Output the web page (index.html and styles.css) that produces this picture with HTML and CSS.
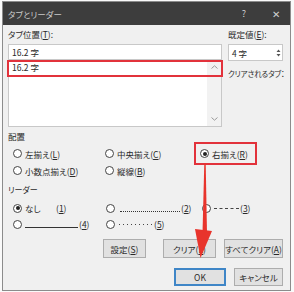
FILE: index.html
```html
<!DOCTYPE html>
<html lang="ja">
<head>
<meta charset="utf-8">
<link rel="stylesheet" href="styles.css">
</head>
<body>
<div class="dialog">
  <div class="titlebar">
    <span class="title">タブとリーダー</span>
    <span class="tb-btn">?</span>
    <span class="tb-btn close">✕</span>
  </div>
  <div class="content">
    <div class="top">
      <div class="tabpos">
        <div class="label">タブ位置(<u>T</u>):</div>
        <div class="input">16.2 字</div>
        <div class="list">
          <div class="items">
            <div class="item">16.2 字</div>
          </div>
          <div class="scrollbar">
            <svg class="chev" width="7" height="4" viewBox="0 0 7 4"><path d="M0.5 3.5L3.5 0.8L6.5 3.5" fill="none" stroke="#9a9a9a" stroke-width="1"/></svg>
            <svg class="chev" width="7" height="4" viewBox="0 0 7 4"><path d="M0.5 0.5L3.5 3.2L6.5 0.5" fill="none" stroke="#9a9a9a" stroke-width="1"/></svg>
          </div>
        </div>
      </div>
      <div class="defaults">
        <div class="label">既定値(<u>E</u>):</div>
        <div class="spin">
          <span class="spin-val">4 字</span>
          <span class="spin-btns">
            <svg width="5" height="10" viewBox="0 0 5 10"><path d="M0.5 4L2.5 1.5L4.5 4Z M0.5 6L2.5 8.5L4.5 6Z" fill="#555"/></svg>
          </span>
        </div>
        <div class="label cleared">クリアされるタブ：</div>
      </div>
    </div>

    <div class="section">配置</div>
    <div class="grid align-grid">
      <label class="radio"><span class="circle"></span>左揃え(<u>L</u>)</label>
      <label class="radio"><span class="circle"></span>中央揃え(<u>C</u>)</label>
      <label class="radio"><span class="circle on"></span>右揃え(<u>R</u>)</label>
      <label class="radio"><span class="circle"></span>小数点揃え(<u>D</u>)</label>
      <label class="radio"><span class="circle"></span>縦線(<u>B</u>)</label>
    </div>

    <div class="section leader-title">リーダー</div>
    <div class="grid leader-grid">
      <label class="radio"><span class="circle on"></span><span class="nashi">なし</span>(<u>1</u>)</label>
      <label class="radio"><span class="circle"></span><span class="ld dots2"></span>(<u>2</u>)</label>
      <label class="radio"><span class="circle"></span><span class="ld dash3"></span>(<u>3</u>)</label>
      <label class="radio"><span class="circle"></span><span class="ld line4"></span>(<u>4</u>)</label>
      <label class="radio"><span class="circle"></span><span class="ld mid5"></span>(<u>5</u>)</label>
    </div>

    <div class="btnrow first">
      <button class="btn b-set">設定(<u>S</u>)</button>
      <button class="btn b-clear">クリア(<u>L</u>)</button>
      <button class="btn b-all">すべてクリア(<u>A</u>)</button>
    </div>
    <div class="btnrow second">
      <button class="btn b-ok">OK</button>
      <button class="btn b-cancel">キャンセル</button>
    </div>
  </div>
  <div class="mark mark-item"></div>
  <div class="mark mark-right"></div>
</div>
<svg class="arrow" width="294" height="292" viewBox="0 0 294 292">
  <polygon points="204.3,163 205.7,163 207,233 202.5,233" fill="#e8342c"/>
  <polygon points="195,229 212,231 200.5,258" fill="#e8342c"/>
</svg>
</body>
</html>
```
FILE: styles.css
```css
* { box-sizing: border-box; }
html, body { margin: 0; padding: 0; }
body {
  width: 294px;
  height: 292px;
  background: #fafafa;
  position: relative;
  overflow: hidden;
  font-family: "Noto Sans CJK JP", "Noto Sans", sans-serif;
  font-size: 8.5px;
  color: #2a2a2a;
  font-feature-settings: "palt";
}
u { text-decoration: underline; text-underline-offset: 1px; }

.dialog {
  position: relative;
  margin: 1px 0 0 2px;
  width: 289px;
  height: 290px;
  border: 1px solid #8c8c8c;
  background: #f0f0f0;
}
.titlebar {
  height: 23px;
  background: #3d3d3d;
  color: #c9c9c9;
  display: flex;
  align-items: center;
  padding: 0 6px 0 5px;
}
.title { flex: 1; }
.tb-btn { width: 16px; text-align: center; font-size: 9px; color: #d0d0d0; }
.tb-btn.close { margin-left: 16px; font-size: 10px; }

.content { padding: 0 7px 0 5px; }
.top { display: flex; gap: 6px; }
.tabpos { width: 214px; }
.defaults { flex: 1; min-width: 0; }
.label { height: 14px; line-height: 14px; margin-top: 2px; white-space: nowrap; }
.input {
  margin-top: 3px;
  height: 16px;
  line-height: 14px;
  padding-left: 3px;
  background: #fff;
  border: 1px solid #c8c8c8;
}
.list {
  height: 67px;
  background: #fff;
  border: 1px solid #c8c8c8;
  border-top: none;
  display: flex;
}
.items { flex: 1; }
.item { height: 16px; line-height: 15px; padding-left: 3px; }
.scrollbar {
  width: 14px;
  background: #f2f2f2;
  display: flex;
  flex-direction: column;
  justify-content: space-between;
  align-items: center;
  padding: 5px 0 5px;
}
.chev { display: block; }

.spin {
  margin-top: 3px;
  height: 17px;
  background: #fff;
  border: 1px solid #c8c8c8;
  display: flex;
  align-items: center;
  padding-left: 3px;
}
.spin-val { flex: 1; }
.spin-btns { width: 8px; display: flex; justify-content: center; }
.spin-btns svg { display: block; }
.label.cleared { margin-top: 6px; font-size: 7.6px; letter-spacing: -0.2px; }

.section { height: 14px; line-height: 14px; margin-top: 2px; }
.grid { display: grid; padding-left: 5px; }
.align-grid { grid-template-columns: 92px 95px auto; grid-auto-rows: 17px; margin-top: 2px; }
.leader-grid { grid-template-columns: 93px 96px auto; grid-auto-rows: 16px; margin-top: 3px; }
.leader-title { margin-top: 4px; font-size: 8px; }

.radio { display: flex; align-items: center; white-space: nowrap; }
.circle {
  width: 9px;
  height: 9px;
  border: 1px solid #444;
  border-radius: 50%;
  background: #fff;
  margin-right: 3px;
  flex: none;
  display: flex;
  align-items: center;
  justify-content: center;
}
.circle.on::after {
  content: "";
  width: 4px;
  height: 4px;
  border-radius: 50%;
  background: #222;
}
.nashi { width: 31px; }
.ld { display: inline-block; flex: none; height: 8px; margin-right: 1px; }
.dots2 { width: 60px; margin-left: 2px; border-bottom: 1px dotted #333; height: 7px; }
.dash3 { width: 25px; border-bottom: 1px dashed #444; height: 5px; align-self: center; transform: translateY(-2px); }
.line4 { width: 53px; border-bottom: 1px solid #333; height: 7px; }
.mid5 {
  width: 34px;
  height: 1px;
  background: repeating-linear-gradient(90deg, #444 0 1px, transparent 1px 4px);
  margin-left: 1px;
}

.btnrow { display: flex; justify-content: flex-end; }
.btnrow.first { margin-top: 7px; }
.btnrow.second { margin-top: 10px; }
.btn {
  font: inherit;
  color: #2a2a2a;
  background: #e1e1e1;
  border: 1px solid #adadad;
  height: 19px;
  padding: 0;
  margin: 0;
  white-space: nowrap;
}
.b-set { width: 43px; margin-right: 17px; }
.b-clear { width: 53px; margin-right: 8px; }
.b-all { width: 59px; }
.b-ok { width: 52px; height: 18px; border: 2px solid #3f86c7; margin-right: 8px; }
.b-cancel { width: 49px; height: 18px; }

.mark { position: absolute; border: 2px solid #e2323b; }
.mark-item { left: 4px; top: 58px; width: 216px; height: 17px; }
.mark-right { left: 191px; top: 140px; width: 63px; height: 23px; }

.arrow { position: absolute; left: 0; top: 0; pointer-events: none; }
```
